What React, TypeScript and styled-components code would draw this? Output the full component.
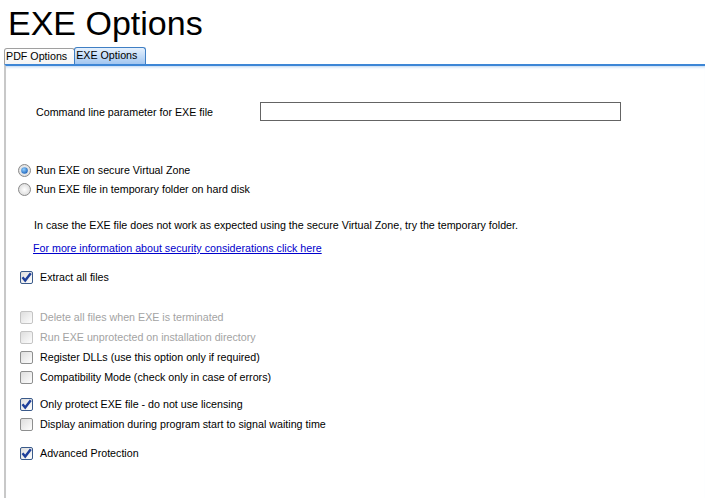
import React from 'react'
import styled, { createGlobalStyle } from 'styled-components'

const GlobalStyle = createGlobalStyle`
  html, body {
    margin: 0;
    padding: 0;
    background: #ffffff;
  }
  body {
    font-family: 'Liberation Sans', Arial, sans-serif;
    color: #000;
  }
`

type CheckItem = { label: string; checked?: boolean; disabled?: boolean }
type Group = { space: number; items: CheckItem[] }

const checkGroups: Group[] = [
  {
    space: 27,
    items: [
      { label: 'Delete all files when EXE is terminated', disabled: true },
      { label: 'Run EXE unprotected on installation directory', disabled: true },
      { label: 'Register DLLs (use this option only if required)' },
      { label: 'Compatibility Mode (check only in case of errors)' },
    ],
  },
  {
    space: 14,
    items: [
      { label: 'Only protect EXE file - do not use licensing', checked: true },
      { label: 'Display animation during program start to signal waiting time' },
    ],
  },
  { space: 16, items: [{ label: 'Advanced Protection', checked: true }] },
]

function CheckBox(props: { checked?: boolean; disabled?: boolean }) {
  return (
    <BoxIcon width="13" height="13" viewBox="0 0 13 13">
      <defs>
        <linearGradient id="cbFill" x1="0" y1="0" x2="1" y2="1">
          <stop offset="0" stopColor="#dcdcdc" />
          <stop offset="1" stopColor="#ffffff" />
        </linearGradient>
      </defs>
      <rect
        x="0.5"
        y="0.5"
        width="12"
        height="12"
        rx="1.5"
        fill="url(#cbFill)"
        stroke={props.disabled ? '#c4c4c4' : props.checked ? '#3a5a8a' : '#8e8f8f'}
      />
      {props.checked && (
        <path d="M2.5 6.2 L5.2 9.5 L10.8 2.2" fill="none" stroke="#1e3f9a" strokeWidth="2.4" />
      )}
    </BoxIcon>
  )
}

function Radio(props: { selected?: boolean }) {
  return (
    <BoxIcon width="13" height="13" viewBox="0 0 13 13">
      <defs>
        <radialGradient id="rdFill" cx="0.5" cy="0.5" r="0.6">
          <stop offset="0" stopColor="#ffffff" />
          <stop offset="1" stopColor="#d6d6d6" />
        </radialGradient>
        <radialGradient id="rdDot" cx="0.4" cy="0.35" r="0.7">
          <stop offset="0" stopColor="#8fd0ff" />
          <stop offset="1" stopColor="#1b5fb8" />
        </radialGradient>
      </defs>
      <circle cx="6.5" cy="6.5" r="6" fill="url(#rdFill)" stroke="#8b8b8b" />
      {props.selected && <circle cx="6.5" cy="6.5" r="3.3" fill="url(#rdDot)" />}
    </BoxIcon>
  )
}

export default function App() {
  return (
    <Page>
      <GlobalStyle />
      <Title>EXE Options</Title>
      <TabStrip>
        <Tab>PDF Options</Tab>
        <Tab active>EXE Options</Tab>
      </TabStrip>
      <Panel>
        <ParamRow>
          <ParamLabel>Command line parameter for EXE file</ParamLabel>
          <ParamInput type="text" />
        </ParamRow>

        <RadioGroup>
          <OptionRow>
            <Radio selected />
            <OptionText>Run EXE on secure Virtual Zone</OptionText>
          </OptionRow>
          <OptionRow>
            <Radio />
            <OptionText>Run EXE file in temporary folder on hard disk</OptionText>
          </OptionRow>
        </RadioGroup>

        <Note>In case the EXE file does not work as expected using the secure Virtual Zone, try the temporary folder.</Note>
        <InfoLink href="#">For more information about security considerations click here</InfoLink>

        <CheckGroup space={16}>
          <CheckRow>
            <CheckBox checked />
            <OptionText>Extract all files</OptionText>
          </CheckRow>
        </CheckGroup>

        {checkGroups.map((group, gi) => (
          <CheckGroup key={gi} space={group.space}>
            {group.items.map((item) => (
              <CheckRow key={item.label}>
                <CheckBox checked={item.checked} disabled={item.disabled} />
                <OptionText disabled={item.disabled}>{item.label}</OptionText>
              </CheckRow>
            ))}
          </CheckGroup>
        ))}
      </Panel>
    </Page>
  )
}

const Page = styled.div`
  width: 705px;
  height: 498px;
  overflow: hidden;
  display: flex;
  flex-direction: column;
`

const Title = styled.h1`
  margin: 0;
  padding: 5px 0 0 8px;
  height: 47px;
  box-sizing: border-box;
  font-size: 34px;
  line-height: 36px;
  font-weight: normal;
  color: #000;
`

const TabStrip = styled.div`
  display: flex;
  padding-left: 4px;
  height: 17px;
  align-items: flex-end;
`

const Tab = styled.div<{ active?: boolean }>`
  height: ${(p) => (p.active ? '17px' : '16px')};
  box-sizing: border-box;
  padding: 0 ${(p) => (p.active ? '8px' : '7px')} 0 1px;
  font-size: 10.7px;
  line-height: 15px;
  color: #000;
  border: 1px solid ${(p) => (p.active ? '#3f7fc4' : '#a0a0a0')};
  border-bottom: none;
  border-radius: 3px 3px 0 0;
  background: ${(p) =>
    p.active
      ? 'linear-gradient(to bottom, #e6f1fd 0%, #c4dcf7 50%, #a2c6f0 100%)'
      : 'linear-gradient(to bottom, #ffffff 0%, #f4f4f4 100%)'};
  margin-right: ${(p) => (p.active ? '0' : '-1px')};
`

const Panel = styled.div`
  flex: 1;
  margin-left: 4px;
  border-left: 2px solid #c8c8c8;
  border-top: 2px solid #3d86d6;
  box-shadow: inset 0 3px 3px -2px #b8d4f3;
  padding: 36px 0 0 0;
  display: flex;
  flex-direction: column;
  align-items: flex-start;
  font-size: 10.7px;
`

const ParamRow = styled.div`
  display: flex;
  align-items: center;
  padding-left: 30px;
  height: 20px;
`

const ParamLabel = styled.span`
  width: 224px;
  font-size: 10.7px;
`

const ParamInput = styled.input`
  width: 361px;
  height: 19px;
  box-sizing: border-box;
  border: 1px solid #646464;
  margin: -1px 0 0 0;
  padding: 0 2px;
  background: #fff;
`

const RadioGroup = styled.div`
  display: flex;
  flex-direction: column;
  gap: 6px;
  padding-left: 12px;
  margin-top: 42px;
`

const OptionRow = styled.div`
  display: flex;
  align-items: center;
  gap: 5px;
  height: 13px;
`

const BoxIcon = styled.svg`
  flex: none;
  display: block;
`

const OptionText = styled.span<{ disabled?: boolean }>`
  font-size: 10.7px;
  line-height: 13px;
  color: ${(p) => (p.disabled ? '#a3a3a3' : '#000')};
  white-space: nowrap;
`

const Note = styled.div`
  margin: 23px 0 0 28px;
  font-size: 10.7px;
  line-height: 13px;
`

const InfoLink = styled.a`
  margin: 10px 0 0 27px;
  font-size: 10.7px;
  line-height: 13px;
  color: #0000cc;
  text-decoration: underline;
`

const CheckGroup = styled.div<{ space: number }>`
  display: flex;
  flex-direction: column;
  gap: 7px;
  margin-top: ${(p) => p.space}px;
`

const CheckRow = styled.div`
  display: flex;
  align-items: center;
  gap: 7px;
  height: 13px;
  padding-left: 14px;
`
